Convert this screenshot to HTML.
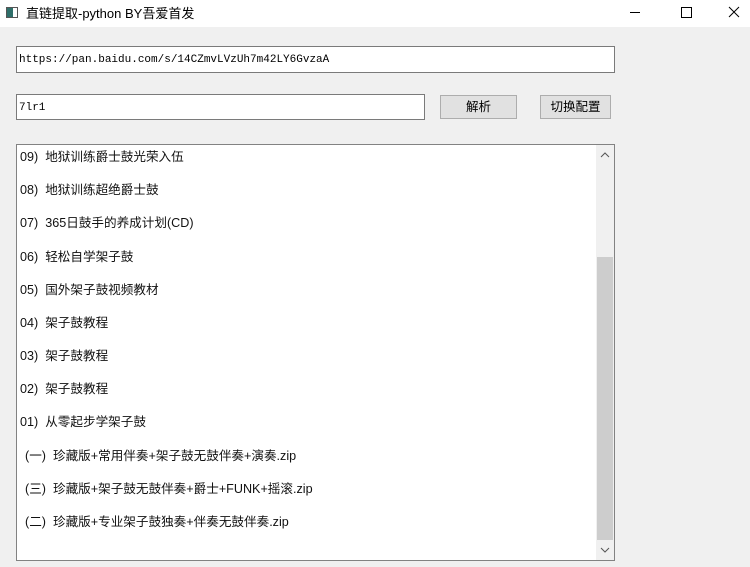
<!DOCTYPE html>
<html><head><meta charset="utf-8"><style>
*{margin:0;padding:0;box-sizing:border-box}
body{width:750px;height:567px;background:#f0f0f0;font-family:"Liberation Sans","Microsoft YaHei","Noto Sans CJK SC",sans-serif;font-size:12px;color:#000;position:relative;overflow:hidden}
.tb{position:absolute;left:0;top:0;width:750px;height:27px;background:#fff}
.tb .t{position:absolute;left:26px;top:3px;font-size:13px}
.ic{position:absolute;left:6px;top:7px;width:12px;height:11px;border:1px solid #555;background:#fff}
.ic:before{content:"";position:absolute;left:0;top:0;width:6px;height:9px;background:#2f6f6a}
.in{position:absolute;background:#fff;border:1px solid #7a7a7a;font-family:"Liberation Mono","Noto Sans CJK SC",monospace;font-size:11px;padding:7px 0 0 2px}
.btn{position:absolute;background:#e1e1e1;border:1px solid #adadad;text-align:center;font-size:12.5px;line-height:23px}
.list{position:absolute;left:16px;top:144px;width:599px;height:417px;background:#fff;border:1px solid #828282}
.row{position:absolute;left:3px;font-size:12.6px;white-space:pre;color:#111}
.sb{position:absolute;right:0;top:0;width:18px;height:415px;background:#f0f0f0}
.th{position:absolute;left:1px;top:112px;width:16px;height:283px;background:#cdcdcd}
</style></head><body>
<div class="tb"><div class="ic"></div><div class="t">直链提取-python BY吾爱首发</div>
<svg style="position:absolute;left:620px;top:0" width="130" height="27"><path d="M10 12.5h10" stroke="#000" stroke-width="1"/><rect x="61.5" y="7.5" width="10" height="10" fill="none" stroke="#000"/><path d="M109 7l10 10M119 7l-10 10" stroke="#000"/></svg></div>
<div class="in" style="left:16px;top:46px;width:599px;height:27px">https://pan.baidu.com/s/14CZmvLVzUh7m42LY6GvzaA</div>
<div class="in" style="left:16px;top:94px;width:409px;height:26px">7lr1</div>
<div class="btn" style="left:440px;top:95px;width:77px;height:24px">解析</div>
<div class="btn" style="left:540px;top:95px;width:71px;height:24px">切换配置</div>
<div class="list">
<div class="row" style="top:1px">09)  地狱训练爵士鼓光荣入伍</div>
<div class="row" style="top:34px">08)  地狱训练超绝爵士鼓</div>
<div class="row" style="top:67px">07)  365日鼓手的养成计划(CD)</div>
<div class="row" style="top:101px">06)  轻松自学架子鼓</div>
<div class="row" style="top:134px">05)  国外架子鼓视频教材</div>
<div class="row" style="top:167px">04)  架子鼓教程</div>
<div class="row" style="top:200px">03)  架子鼓教程</div>
<div class="row" style="top:233px">02)  架子鼓教程</div>
<div class="row" style="top:266px">01)  从零起步学架子鼓</div>
<div class="row" style="top:300px;left:8px">(一)  珍藏版+常用伴奏+架子鼓无鼓伴奏+演奏.zip</div>
<div class="row" style="top:333px;left:8px">(三)  珍藏版+架子鼓无鼓伴奏+爵士+FUNK+摇滚.zip</div>
<div class="row" style="top:366px;left:8px">(二)  珍藏版+专业架子鼓独奏+伴奏无鼓伴奏.zip</div>
<div class="sb"><svg style="position:absolute;left:4px;top:6px" width="10" height="8"><path d="M1 6l4-4 4 4" fill="none" stroke="#555"/></svg><div class="th"></div><svg style="position:absolute;left:4px;top:401px" width="10" height="8"><path d="M1 2l4 4 4-4" fill="none" stroke="#555"/></svg></div>
</div>
</body></html>
